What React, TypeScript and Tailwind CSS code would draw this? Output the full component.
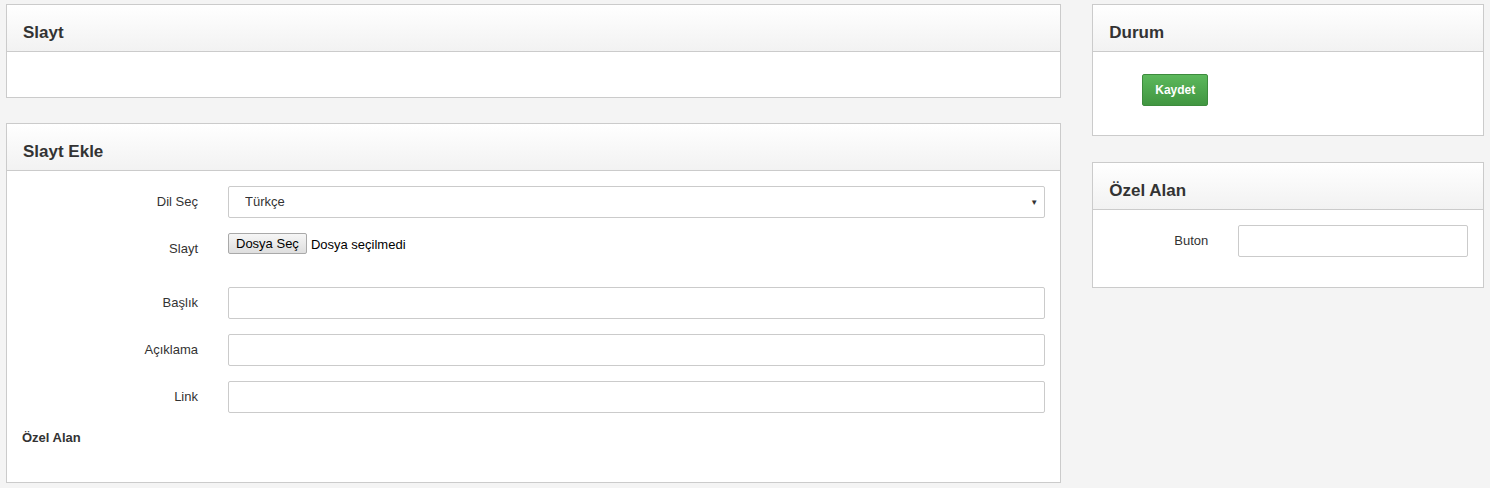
import React from 'react';

const font = { fontFamily: '"Liberation Sans", Arial, sans-serif' };

function Panel({ title, children }: { title: string; children?: React.ReactNode }) {
  return (
    <div className="border border-[#cbcbcb] bg-white">
      <div className="h-[47px] flex items-center pt-[9px] px-4 border-b border-[#cbcbcb] bg-gradient-to-b from-white to-[#f2f2f2]">
        <h3 className="text-[17px] font-bold text-[#333] leading-none">{title}</h3>
      </div>
      {children}
    </div>
  );
}

function Field({ label, children }: { label: string; children: React.ReactNode }) {
  return (
    <div className="flex items-center">
      <label className="w-[191px] text-right text-[13px] text-[#333] shrink-0">{label}</label>
      <div className="ml-[30px] flex-1 mr-[15px]">{children}</div>
    </div>
  );
}

const inputCls = 'w-full h-[32px] border border-[#cbcbcb] rounded-[2px] bg-white px-3 text-[13px] outline-none';

export default function App() {
  return (
    <div className="min-h-screen bg-[#f4f4f4] text-[#333]" style={font}>
      <div className="flex gap-[31px] pl-[6px] pt-[4px] pb-[5px] w-[1484px]">
        {/* Sol kolon */}
        <div className="w-[1056px] flex flex-col gap-[25px]">
          <Panel title="Slayt">
            <div className="h-[45px]" />
          </Panel>

          <Panel title="Slayt Ekle">
            <div className="pt-[15px] pb-[34px] flex flex-col">
              <Field label="Dil Seç">
                <div className="relative">
                  <select className={`${inputCls} appearance-none pl-4`} defaultValue="tr">
                    <option value="tr">Türkçe</option>
                  </select>
                  <span className="absolute right-[7px] top-[11px] text-[8px] text-[#333] pointer-events-none">▼</span>
                </div>
              </Field>

              <div className="flex mt-[15px] h-[54px]">
                <label className="w-[191px] text-right text-[13px] pt-[6px] shrink-0">Slayt</label>
                <div className="ml-[30px] flex items-start text-[13px]">
                  <button className="h-[21px] px-[7px] border border-[#a9a9a9] rounded-[2px] bg-gradient-to-b from-[#f6f6f6] to-[#dedede] text-[13px] text-black leading-none">
                    Dosya Seç
                  </button>
                  <span className="ml-[4px] mt-[2px] text-black">Dosya seçilmedi</span>
                </div>
              </div>

              <div className="flex flex-col gap-[15px]">
                <Field label="Başlık">
                  <input className={inputCls} />
                </Field>
                <Field label="Açıklama">
                  <input className={inputCls} />
                </Field>
                <Field label="Link">
                  <input className={inputCls} />
                </Field>
              </div>

              <div className="mt-[15px] pl-[15px] text-[13px] font-bold">Özel Alan</div>
            </div>
          </Panel>
        </div>

        {/* Sağ kolon */}
        <div className="w-[392px] flex flex-col gap-[26px]">
          <Panel title="Durum">
            <div className="pt-[22px] pb-[29px] pl-[49px]">
              <button className="w-[66px] h-[32px] rounded-[2px] border border-[#3d8b3d] bg-gradient-to-b from-[#5cb85c] to-[#419641] text-white text-[12px] font-bold">
                Kaydet
              </button>
            </div>
          </Panel>

          <Panel title="Özel Alan">
            <div className="pt-[15px] pb-[30px] flex items-center">
              <label className="w-[115px] text-right text-[13px] shrink-0">Buton</label>
              <div className="ml-[30px] flex-1 mr-[15px]">
                <input className={inputCls} />
              </div>
            </div>
          </Panel>
        </div>
      </div>
    </div>
  );
}
